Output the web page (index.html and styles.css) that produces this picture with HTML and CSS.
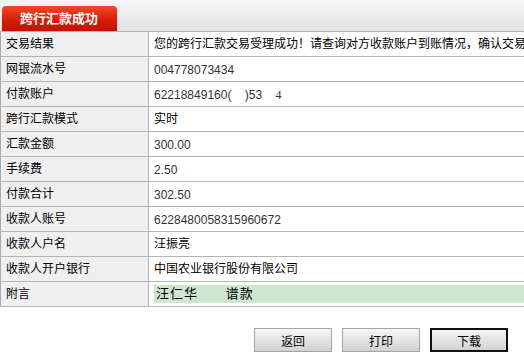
FILE: index.html
```html
<!DOCTYPE HTML>
<html>
<head>
<title>跨行汇款成功</title>
<link rel="stylesheet" href="styles.css">
</head>
<body>
<div class="tabbar">
    <div class="tab">跨行汇款成功</div>
</div>

<table class="result">
<tr><th>交易结果</th><td>您的跨行汇款交易受理成功！请查询对方收款账户到账情况，确认交易结果。</td></tr>
<tr><th>网银流水号</th><td class="num">004778073434</td></tr>
<tr><th>付款账户</th><td class="num">62218849160(&nbsp;&nbsp;&nbsp;&nbsp;)53&nbsp;&nbsp;&nbsp;&nbsp;<span class="serif">4</span></td></tr>
<tr><th>跨行汇款模式</th><td>实时</td></tr>
<tr><th>汇款金额</th><td class="num">300.00</td></tr>
<tr><th>手续费</th><td class="num">2.50</td></tr>
<tr><th>付款合计</th><td class="num">302.50</td></tr>
<tr><th>收款人账号</th><td class="num">6228480058315960672</td></tr>
<tr><th>收款人户名</th><td>汪振亮</td></tr>
<tr><th>收款人开户银行</th><td>中国农业银行股份有限公司</td></tr>
<tr><th>附言</th><td><div class="memo">汪仁华&nbsp;&nbsp;&nbsp;&nbsp;&nbsp;&nbsp;谱款</div></td></tr>
</table>

<div class="buttons">
    <button>返回</button>
    <button>打印</button>
    <button class="default">下载</button>
</div>
</body>
</html>
```

FILE: styles.css
```css
body {margin: 0; background: #fff; font-family: "Liberation Sans", "Noto Sans CJK SC", sans-serif; font-size: 12px; line-height: 16px; color: #000;}
.tabbar {height: 31px; display: flex; align-items: flex-end; padding-left: 2px; background: linear-gradient(#f5f5f5, #e3e3e3);}
.tab {width: 115px; height: 25px; box-sizing: border-box; padding-left: 18px; line-height: 25px; color: #fff; font-weight: bold; font-size: 13px; border-radius: 4px 4px 0 0; background: linear-gradient(#f04a24, #d71a02 60%, #c41200);}
.result {width: 524px; table-layout: fixed; border-collapse: collapse; border-left: 1px solid #a9a9a9;}
.result tr {height: 25px;}
.result th, .result td {height: 24px; box-sizing: border-box; padding: 0 0 0 5px; line-height: 16px; border: 1px solid #b4b4b4; border-left: 0; white-space: nowrap; overflow: hidden; text-align: left; font-weight: normal; vertical-align: middle;}
.result th {width: 148px; background: #efefef; border-right: 1px solid #b4b4b4;}
.result td {border-right: 0;}
.result td.num {color: #333; padding-top: 2px;}
.serif {font-family: "Liberation Serif", serif;}
.memo {height: 18px; line-height: 18px; padding-left: 2px; background: #cde7cf; font-size: 13px; letter-spacing: 1px;}
.buttons {display: flex; justify-content: flex-end; gap: 10px; padding: 21px 16px 0 0;}
.buttons button {width: 78px; height: 24px; font-family: inherit; font-size: 12px; color: #000; border: 1px solid #a3a3a3; background: linear-gradient(#f6f6f6, #d2d2d2); padding: 0;}
.buttons button.default {border: 2px solid #111;}
```
